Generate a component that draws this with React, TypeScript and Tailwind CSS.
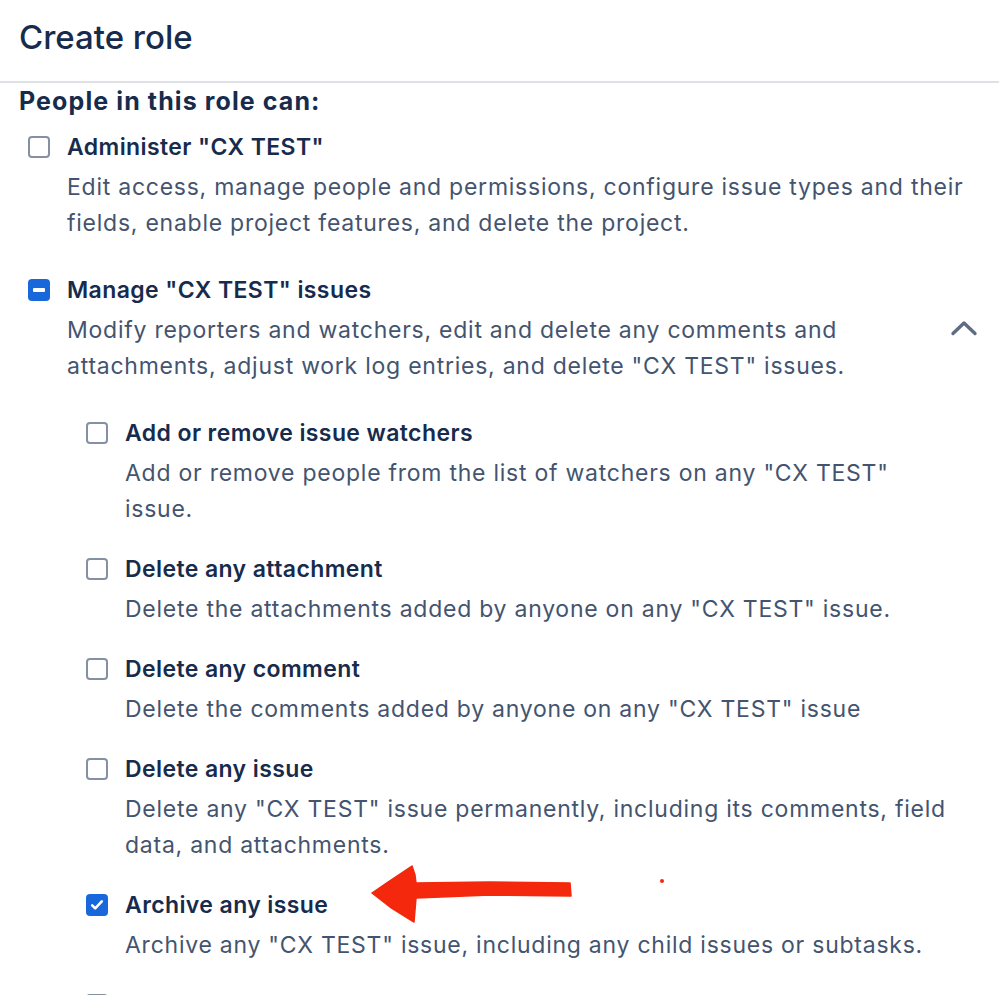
import React from 'react';

type Perm = {
  label: string;
  desc: string;
  checked?: boolean;
};

const subPerms: Perm[] = [
  {
    label: 'Add or remove issue watchers',
    desc: 'Add or remove people from the list of watchers on any "CX TEST" issue.',
  },
  {
    label: 'Delete any attachment',
    desc: 'Delete the attachments added by anyone on any "CX TEST" issue.',
  },
  {
    label: 'Delete any comment',
    desc: 'Delete the comments added by anyone on any "CX TEST" issue',
  },
  {
    label: 'Delete any issue',
    desc: 'Delete any "CX TEST" issue permanently, including its comments, field data, and attachments.',
  },
  {
    label: 'Archive any issue',
    desc: 'Archive any "CX TEST" issue, including any child issues or subtasks.',
    checked: true,
  },
  {
    label: 'Edit any worklog',
    desc: 'Edit the work logged by anyone on any "CX TEST" issue.',
  },
];

function Box({ state }: { state?: 'on' | 'mixed' | 'off' }) {
  if (state === 'on') {
    return (
      <span className="mt-[7px] flex h-[22px] w-[22px] shrink-0 items-center justify-center rounded-[4px] bg-[#1868db]">
        <svg width="14" height="12" viewBox="0 0 14 12" fill="none">
          <path d="M2.2 6.4l3 3 6.6-7" stroke="white" strokeWidth="2.6" strokeLinecap="round" strokeLinejoin="round" />
        </svg>
      </span>
    );
  }
  if (state === 'mixed') {
    return (
      <span className="mt-[7px] flex h-[22px] w-[22px] shrink-0 items-center justify-center rounded-[4px] bg-[#1868db]">
        <span className="h-[4px] w-[12px] rounded-[1px] bg-white" />
      </span>
    );
  }
  return <span className="mt-[7px] h-[22px] w-[22px] shrink-0 rounded-[4px] border-2 border-[#8590a2] bg-white" />;
}

function Item({ p, state, textWidth }: { p: Perm; state?: 'on' | 'mixed' | 'off'; textWidth: string }) {
  return (
    <div className="flex items-start gap-[17px]">
      <Box state={state} />
      <div className={textWidth}>
        <div className="text-[23px] font-semibold leading-[36px] tracking-[0.4px] text-[#172b4d]">{p.label}</div>
        <div className="mt-[4px] text-[23px] leading-[36px] tracking-[0.75px] text-[#44546f]">{p.desc}</div>
      </div>
    </div>
  );
}

export default function App() {
  return (
    <div
      className="relative h-screen overflow-hidden bg-white"
      style={{ fontFamily: 'Inter, "Noto Sans", sans-serif' }}
    >
      <div className="px-[19px] pt-[19px] pb-[26px]">
        <h1 className="text-[33px] font-medium leading-[36px] text-[#172b4d]">Create role</h1>
      </div>
      <div className="h-[2px] bg-[#dfe1e6]" />

      <div className="px-[19px] pt-[2px]">
        <h2 className="text-[25px] font-bold leading-[32px] tracking-[1.1px] text-[#172b4d]">People in this role can:</h2>

        <div className="mt-[12px] flex flex-col gap-[31px] pl-[9px]">
          <Item
            p={{
              label: 'Administer "CX TEST"',
              desc: 'Edit access, manage people and permissions, configure issue types and their fields, enable project features, and delete the project.',
            }}
            textWidth="w-[900px]"
          />

          <div>
            <div className="flex items-center">
              <Item
                p={{
                  label: 'Manage "CX TEST" issues',
                  desc: 'Modify reporters and watchers, edit and delete any comments and attachments, adjust work log entries, and delete "CX TEST" issues.',
                }}
                state="mixed"
                textWidth="w-[800px]"
              />
              <svg className="ml-auto mr-[2px]" width="28" height="18" viewBox="0 0 28 18" fill="none">
                <path d="M3 14.5L14 4l11 10.5" stroke="#5e6c84" strokeWidth="3.4" strokeLinecap="round" strokeLinejoin="round" />
              </svg>
            </div>

            <div className="mt-[31px] flex flex-col gap-[24px] pl-[58px]">
              {subPerms.map((p) => (
                <Item key={p.label} p={p} state={p.checked ? 'on' : 'off'} textWidth="w-[822px]" />
              ))}
            </div>
          </div>
        </div>
      </div>

      {/* annotation arrow drawn over the screenshot */}
      <svg className="pointer-events-none absolute left-[360px] top-[855px]" width="320" height="80" viewBox="0 0 320 80">
        <path
          d="M12 38 L28 27 L52 11 L55 20 L56 28 L130 27 L210 28 L211 41 L130 40 L56 43 L55 55 L54 67 L30 52 Z"
          fill="#f3280c"
          stroke="#f3280c"
          strokeWidth="1.5"
          strokeLinejoin="round"
        />
        <circle cx="302" cy="26" r="2" fill="#f3280c" />
      </svg>
    </div>
  );
}
